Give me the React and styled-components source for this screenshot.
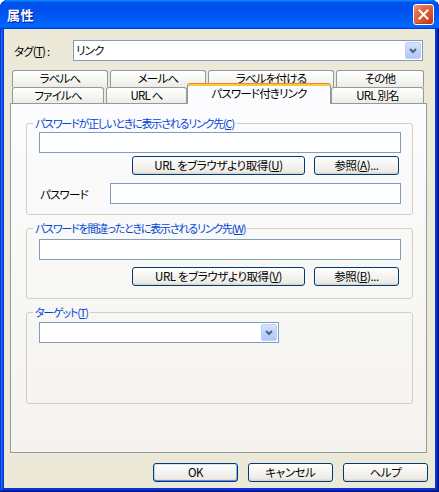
import styled, { createGlobalStyle, css } from 'styled-components'

const GlobalStyle = createGlobalStyle`
  html, body {
    margin: 0;
    padding: 0;
    background: #ffffff;
  }
  body {
    font-family: "Noto Sans CJK JP", "Noto Sans", sans-serif;
    font-size: 11.5px;
    font-feature-settings: "palt" 1;
    color: #000;
  }
  * { box-sizing: border-box; }
`

const Window = styled.div`
  width: 439px;
  height: 492px;
  display: flex;
  flex-direction: column;
  background: #0831d9;
  border-radius: 8px 8px 0 0;
  overflow: hidden;
  box-shadow: inset -1px -1px #00138c, inset 1px 1px #0831d9,
    inset -2px -2px #001ea0, inset 2px 2px #166aee,
    inset -3px -3px #003bda, inset 3px 3px #0855dd;
`

const TitleBar = styled.div`
  height: 29px;
  flex: none;
  display: flex;
  align-items: center;
  justify-content: space-between;
  padding: 0 5px 0 7px;
  background: linear-gradient(180deg, #0997ff, #0053ee 8%, #0050ee 40%, #0066ff 88%, #0066ff 93%, #005bff 95%, #003dd7 96%, #003dd7);
`

const TitleText = styled.div`
  color: #fff;
  font-weight: bold;
  font-size: 13px;
  letter-spacing: 0.5px;
  text-shadow: 1px 1px #0f1089;
`

const CloseButton = styled.div`
  width: 21px;
  height: 21px;
  border: 1px solid #fff;
  border-radius: 3px;
  display: flex;
  align-items: center;
  justify-content: center;
  background: radial-gradient(circle at 90% 90%, #c43d16 0%, #d9532f 40%, #e46d4b 70%, #f09a7f 100%);
  box-shadow: inset 0 -1px 1px #c7381a;
`

const Body = styled.div`
  flex: 1;
  margin: 0 4px 4px;
  background: #ece9d8;
  padding: 11px 8px 6px 6px;
  display: flex;
  flex-direction: column;
`

const TagRow = styled.div`
  display: flex;
  align-items: center;
  padding-left: 4px;
  margin-right: 4px;
  height: 21px;
`

const FieldLabel = styled.div`
  width: ${(p) => p.w}px;
  flex: none;
  letter-spacing: -0.8px;
`

const Key = styled.span`
  text-decoration: underline;
  text-underline-offset: 1px;
`

const Combo = styled.div`
  display: flex;
  align-items: stretch;
  height: 21px;
  width: ${(p) => (p.w ? `${p.w}px` : 'auto')};
  flex: ${(p) => (p.w ? 'none' : '1')};
  border: 1px solid #7f9db9;
  background: #fff;
  padding: 1px;
`

const ComboText = styled.div`
  flex: 1;
  padding-left: 1px;
  line-height: 17px;
  letter-spacing: -0.8px;
`

const DropButton = styled.div`
  width: 16px;
  flex: none;
  border: 1px solid #bad1fc;
  border-radius: 2px;
  background: linear-gradient(180deg, #d6e3fe 0%, #c1d3fb 50%, #b1c7f6 100%);
  display: flex;
  align-items: center;
  justify-content: center;
`

const Tabs = styled.div`
  margin-top: 9px;
  padding-left: 2px;
  display: flex;
  flex-direction: column;
`

const TabRow = styled.div`
  display: flex;
  gap: 2px;
  height: ${(p) => p.h}px;
  align-items: flex-end;
`

const Tab = styled.div`
  width: ${(p) => p.w}px;
  height: ${(p) => p.h}px;
  text-align: center;
  line-height: 14px;
  padding-top: ${(p) => p.pt || 0}px;
  border: 1px solid #919b9c;
  border-bottom: none;
  border-radius: 3px 3px 0 0;
  background: linear-gradient(180deg, #ffffff 0%, #f7f7f4 50%, #ecebe5 100%);
  letter-spacing: -0.8px;
  white-space: nowrap;
  ${(p) =>
    p.active &&
    css`
      position: relative;
      z-index: 2;
      margin: 0 -2px -1px;
      border-top: 1px solid #e68b2c;
      box-shadow: inset 0 2px #ffc73c;
      background: #fcfcfe;
    `}
`

const Panel = styled.div`
  flex: 1;
  border: 1px solid #919b9c;
  background: linear-gradient(180deg, #fcfcfe 0%, #f4f3ee 100%);
  padding: 12px 13px 0 15px;
  display: flex;
  flex-direction: column;
  gap: ${(p) => p.gap}px;
`

const Group = styled.fieldset`
  margin: 0;
  border: 1px solid #d0d0bf;
  border-radius: 3px;
  padding: ${(p) => p.pt}px 11px ${(p) => p.pb}px 12px;
  display: flex;
  flex-direction: column;
  min-width: 0;
`

const Legend = styled.legend`
  color: #0046d5;
  margin-left: -6px;
  padding: 0 2px;
  font-size: 11px;
  line-height: 14px;
  letter-spacing: -1.2px;
`

const TextBox = styled.div`
  height: 21px;
  flex: ${(p) => (p.grow ? '1' : 'none')};
  border: 1px solid #7f9db9;
  background: #fff;
`

const ButtonRow = styled.div`
  display: flex;
  justify-content: flex-end;
  gap: ${(p) => p.gap}px;
  margin-top: ${(p) => p.mt}px;
  margin-right: ${(p) => p.mr || 0}px;
`

const Button = styled.button`
  width: ${(p) => p.w}px;
  height: 19px;
  padding: 0;
  border: 1px solid #003c74;
  border-radius: 3px;
  font: inherit;
  font-size: 11.5px;
  letter-spacing: -0.4px;
  color: #000;
  background: linear-gradient(180deg, #ffffff 0%, #f5f4f0 45%, #ecebe6 86%, #d6d0c5 100%);
  line-height: 15px;
  ${(p) =>
    p.primary &&
    css`
      box-shadow: inset 0 -1px #6982ee, inset 0 1px #cee7ff, inset 1px 0 #bcd4f6, inset -1px 0 #89ade4;
    `}
`

const InlineRow = styled.div`
  display: flex;
  align-items: center;
  margin-top: ${(p) => p.mt}px;
  padding-left: 1px;
`

const Footer = styled.div`
  margin-top: 10px;
  margin-right: -1px;
  display: flex;
  justify-content: flex-end;
  gap: 10px;
`

const Chevron = () => (
  <svg width="8" height="6" viewBox="0 0 8 6">
    <polyline points="1,1 4,4 7,1" fill="none" stroke="#4d6185" strokeWidth="2" />
  </svg>
)

const CloseX = () => (
  <svg width="11" height="11" viewBox="0 0 11 11">
    <path d="M1.5 1.5 L9.5 9.5 M9.5 1.5 L1.5 9.5" stroke="#fff" strokeWidth="2" strokeLinecap="square" />
  </svg>
)

const topTabs = [
  { label: 'ラベルへ', w: 96 },
  { label: 'メールへ', w: 96 },
  { label: 'ラベルを付ける', w: 126 },
  { label: 'その他', w: 88 },
]

const bottomTabs = [
  { label: 'ファイルへ', w: 92 },
  { label: 'URL へ', w: 81 },
  { label: 'パスワード付きリンク', w: 144, active: true },
  { label: 'URL 別名', w: 93 },
]

export default function App() {
  return (
    <>
      <GlobalStyle />
      <Window>
        <TitleBar>
          <TitleText>属性</TitleText>
          <CloseButton>
            <CloseX />
          </CloseButton>
        </TitleBar>
        <Body>
          <TagRow>
            <FieldLabel w={59}>
              タグ(<Key>T</Key>) :
            </FieldLabel>
            <Combo>
              <ComboText>リンク</ComboText>
              <DropButton>
                <Chevron />
              </DropButton>
            </Combo>
          </TagRow>

          <Tabs>
            <TabRow h={17}>
              {topTabs.map((t) => (
                <Tab key={t.label} w={t.w} h={17}>
                  {t.label}
                </Tab>
              ))}
            </TabRow>
            <TabRow h={16}>
              {bottomTabs.map((t) => (
                <Tab
                  key={t.label}
                  w={t.w}
                  h={t.active ? 21 : 16}
                  pt={t.active ? 2 : 0}
                  active={t.active}
                >
                  {t.label}
                </Tab>
              ))}
            </TabRow>
          </Tabs>

          <Panel gap={6}>
            <Group pt={2} pb={10}>
              <Legend>
                パスワードが正しいときに表示されるリンク先(<Key>C</Key>)
              </Legend>
              <TextBox />
              <ButtonRow gap={9} mt={3} mr={2}>
                <Button w={173}>
                  URL をブラウザより取得(<Key>U</Key>)
                </Button>
                <Button w={85}>
                  参照(<Key>A</Key>)...
                </Button>
              </ButtonRow>
              <InlineRow mt={8}>
                <FieldLabel w={70}>パスワード</FieldLabel>
                <TextBox grow />
              </InlineRow>
            </Group>

            <Group pt={4} pb={12}>
              <Legend>
                パスワードを間違ったときに表示されるリンク先(<Key>W</Key>)
              </Legend>
              <TextBox />
              <ButtonRow gap={9} mt={7} mr={2}>
                <Button w={173}>
                  URL をブラウザより取得(<Key>V</Key>)
                </Button>
                <Button w={85}>
                  参照(<Key>B</Key>)...
                </Button>
              </ButtonRow>
            </Group>

            <Group pt={3} pb={60}>
              <Legend>
                ターゲット(<Key>T</Key>)
              </Legend>
              <Combo w={240}>
                <ComboText />
                <DropButton>
                  <Chevron />
                </DropButton>
              </Combo>
            </Group>
          </Panel>

          <Footer>
            <Button w={85} primary>
              OK
            </Button>
            <Button w={85}>キャンセル</Button>
            <Button w={85}>ヘルプ</Button>
          </Footer>
        </Body>
      </Window>
    </>
  )
}
